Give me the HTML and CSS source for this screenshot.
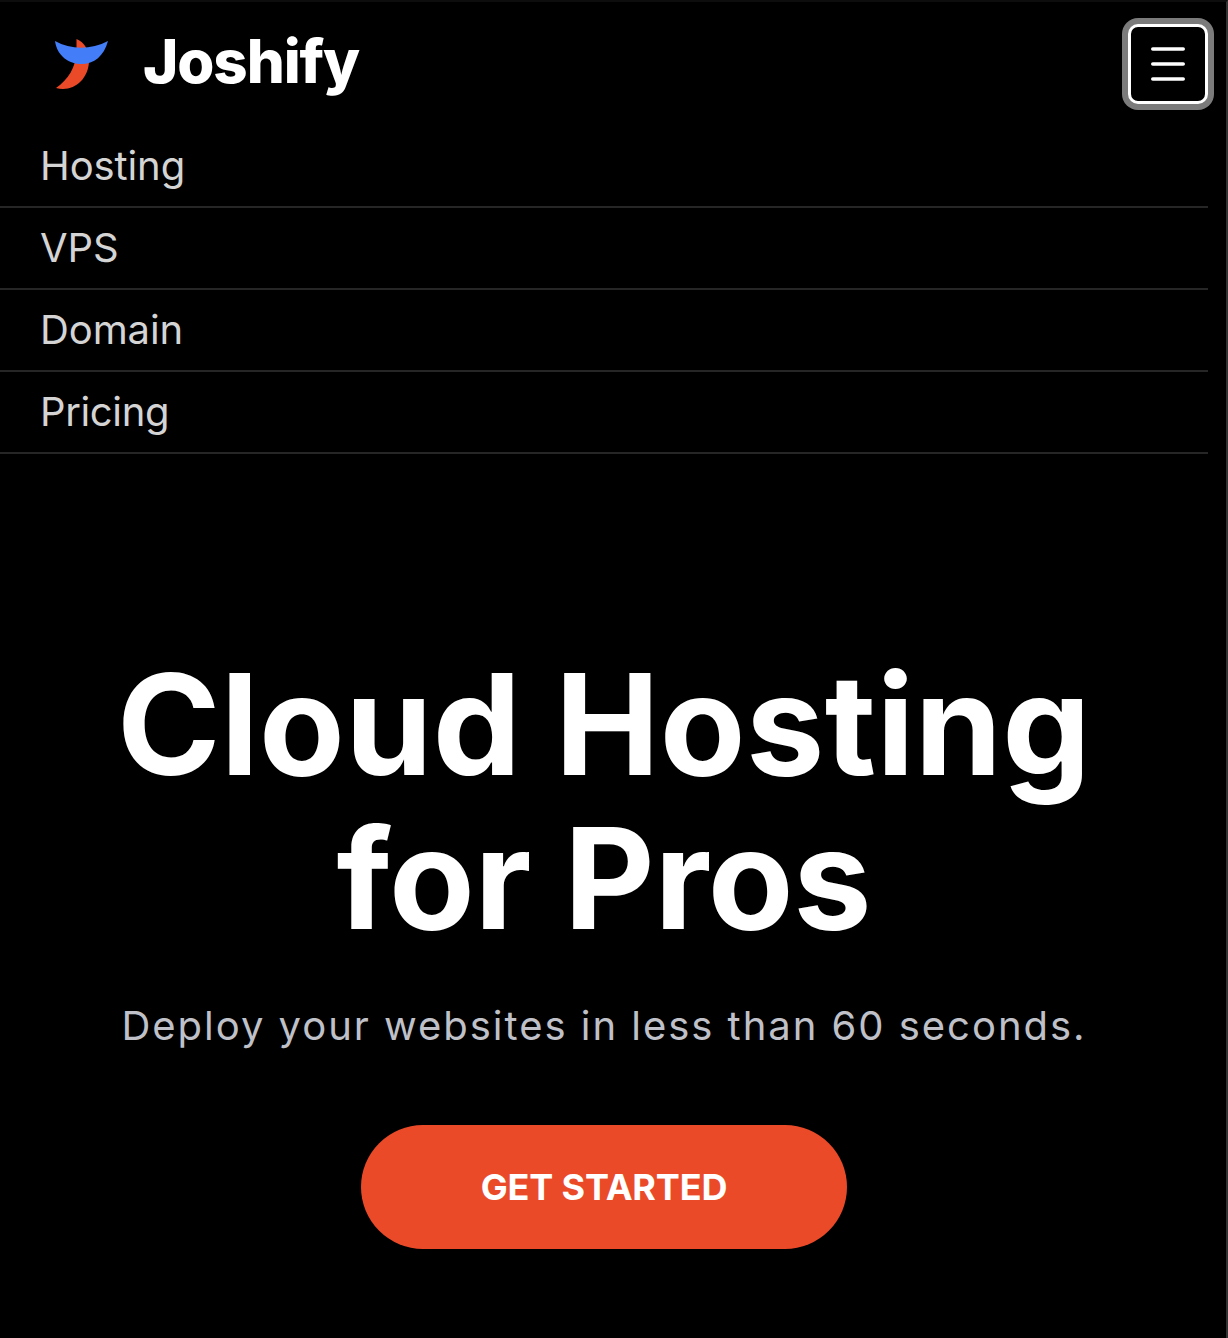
FILE: index.html
```html
<!DOCTYPE html>
<html lang="en">
<head>
<meta charset="utf-8">
<title>Joshify</title>
<link rel="stylesheet" href="styles.css">
</head>
<body>
<div class="page">
  <header class="header">
    <a class="brand">
      <svg class="logo" viewBox="0 0 54 52" width="54" height="52">
        <path fill="#eb4a28" d="M22.500 1C31 4.500 35.500 13 35 24C34 42 19 54.500 2 50C14 42 22 29 22.500 14Z"/>
        <path fill="#437df8" d="M1 3C17 12 37 12 54 3C50 18 40 26 27.500 26C15 26 3 18 1 3Z"/>
      </svg>
      <span class="brand-name">Joshify</span>
    </a>
    <button class="menu-toggle" aria-label="Menu">
      <svg viewBox="0 0 34 34" width="34" height="34" fill="none" stroke="#fff" stroke-width="3.600" stroke-linecap="round">
        <path d="M1.800 2H32.200M1.800 17H32.200M1.800 32H32.200"/>
      </svg>
    </button>
  </header>
  <nav class="nav">
    <a class="nav-link">Hosting</a>
    <a class="nav-link">VPS</a>
    <a class="nav-link">Domain</a>
    <a class="nav-link">Pricing</a>
  </nav>
  <main class="hero">
    <h1 class="title"><span class="title-lead">Cloud Hosting</span><br>for Pros</h1>
    <p class="subtitle">Deploy your websites in less than 60 seconds.</p>
    <button class="cta">GET STARTED</button>
  </main>
</div>
</body>
</html>
```
FILE: styles.css
```css
* {
  box-sizing: border-box;
}

body {
  margin: 0;
  background: #000;
  color: #fff;
  font-family: Inter, sans-serif;
}

.page {
  height: 1338px;
  padding-right: 18px;
  border-top: 2px solid #0d0d0d;
  border-right: 2px solid #333;
  overflow: hidden;
}

.header {
  display: flex;
  justify-content: space-between;
  align-items: flex-start;
  height: 124px;
  padding-left: 54px;
}

.brand {
  display: flex;
  gap: 35px;
}

.logo {
  margin-top: 36px;
}

.brand-name {
  margin-top: 19px;
  font-size: 60px;
  font-weight: 800;
  letter-spacing: -1.1px;
  line-height: 80px;
}

.menu-toggle {
  display: flex;
  align-items: center;
  justify-content: center;
  width: 80px;
  height: 80px;
  margin-top: 22px;
  padding: 0;
  background: #000;
  border: 3px solid #fff;
  border-radius: 10px;
  box-shadow: 0 0 0 6px #7b7b7b;
}

.nav {
  display: flex;
  flex-direction: column;
}

.nav-link {
  height: 82px;
  padding-left: 40px;
  border-bottom: 2px solid #262626;
  color: #d4d4d5;
  font-size: 40px;
  letter-spacing: -0.1px;
  line-height: 80px;
}

.nav-link:last-child {
  letter-spacing: -0.35px;
}

.hero {
  display: flex;
  flex-direction: column;
  align-items: center;
  padding-top: 193px;
}

.title {
  margin: 0;
  font-size: 140px;
  font-weight: 700;
  letter-spacing: -0.3px;
  line-height: 154px;
  text-align: center;
}

.title-lead {
  letter-spacing: 0.35px;
}

.subtitle {
  margin: 41px 0 69px;
  color: #bfc0c8;
  font-size: 40px;
  letter-spacing: 1.97px;
  line-height: 60px;
  white-space: nowrap;
}

.cta {
  width: 486px;
  height: 124px;
  border: 0;
  border-radius: 62px;
  background: #eb4a28;
  color: #fff;
  font-family: inherit;
  font-size: 36px;
  font-weight: 700;
  letter-spacing: -0.15px;
}
```
